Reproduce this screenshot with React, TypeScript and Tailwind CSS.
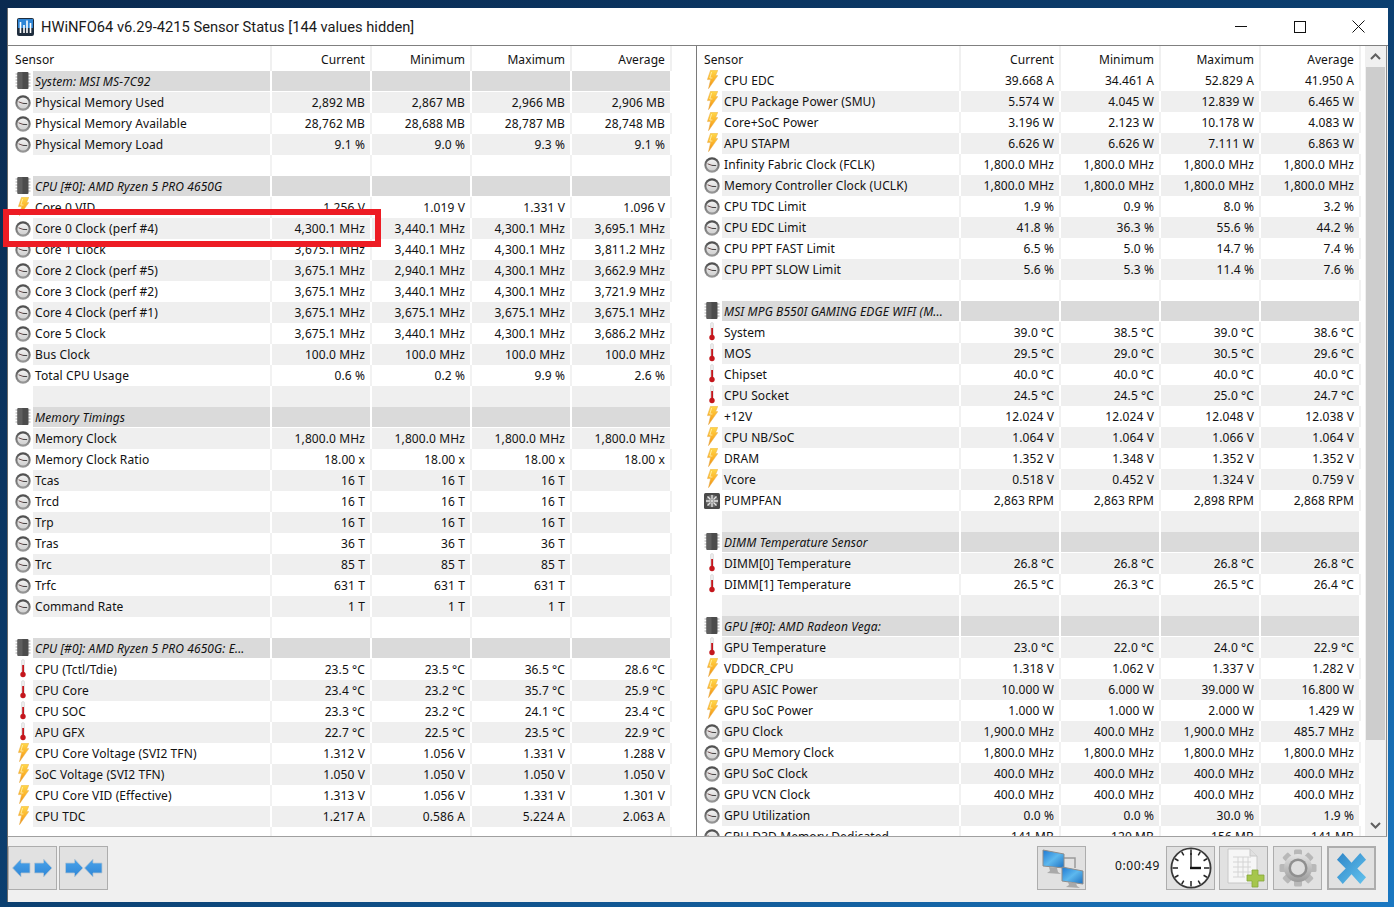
import React from "react";

type Kind = "clock" | "bolt" | "temp" | "fan" | "chip" | "none";
type Row = { k: Kind; n?: string; v?: string[]; g?: boolean };

const r = (k: Kind, n: string, ...v: string[]): Row => ({ k, n, v });
const g = (n: string): Row => ({ k: "chip", n, g: true });
const blank: Row = { k: "none" };

const left: Row[] = [
  g("System: MSI MS-7C92"),
  r("clock", "Physical Memory Used", "2,892 MB", "2,867 MB", "2,966 MB", "2,906 MB"),
  r("clock", "Physical Memory Available", "28,762 MB", "28,688 MB", "28,787 MB", "28,748 MB"),
  r("clock", "Physical Memory Load", "9.1 %", "9.0 %", "9.3 %", "9.1 %"),
  blank,
  g("CPU [#0]: AMD Ryzen 5 PRO 4650G"),
  r("bolt", "Core 0 VID", "1.256 V", "1.019 V", "1.331 V", "1.096 V"),
  r("clock", "Core 0 Clock (perf #4)", "4,300.1 MHz", "3,440.1 MHz", "4,300.1 MHz", "3,695.1 MHz"),
  r("clock", "Core 1 Clock", "3,675.1 MHz", "3,440.1 MHz", "4,300.1 MHz", "3,811.2 MHz"),
  r("clock", "Core 2 Clock (perf #5)", "3,675.1 MHz", "2,940.1 MHz", "4,300.1 MHz", "3,662.9 MHz"),
  r("clock", "Core 3 Clock (perf #2)", "3,675.1 MHz", "3,440.1 MHz", "4,300.1 MHz", "3,721.9 MHz"),
  r("clock", "Core 4 Clock (perf #1)", "3,675.1 MHz", "3,675.1 MHz", "3,675.1 MHz", "3,675.1 MHz"),
  r("clock", "Core 5 Clock", "3,675.1 MHz", "3,440.1 MHz", "4,300.1 MHz", "3,686.2 MHz"),
  r("clock", "Bus Clock", "100.0 MHz", "100.0 MHz", "100.0 MHz", "100.0 MHz"),
  r("clock", "Total CPU Usage", "0.6 %", "0.2 %", "9.9 %", "2.6 %"),
  blank,
  g("Memory Timings"),
  r("clock", "Memory Clock", "1,800.0 MHz", "1,800.0 MHz", "1,800.0 MHz", "1,800.0 MHz"),
  r("clock", "Memory Clock Ratio", "18.00 x", "18.00 x", "18.00 x", "18.00 x"),
  r("clock", "Tcas", "16 T", "16 T", "16 T", ""),
  r("clock", "Trcd", "16 T", "16 T", "16 T", ""),
  r("clock", "Trp", "16 T", "16 T", "16 T", ""),
  r("clock", "Tras", "36 T", "36 T", "36 T", ""),
  r("clock", "Trc", "85 T", "85 T", "85 T", ""),
  r("clock", "Trfc", "631 T", "631 T", "631 T", ""),
  r("clock", "Command Rate", "1 T", "1 T", "1 T", ""),
  blank,
  g("CPU [#0]: AMD Ryzen 5 PRO 4650G: E..."),
  r("temp", "CPU (Tctl/Tdie)", "23.5 °C", "23.5 °C", "36.5 °C", "28.6 °C"),
  r("temp", "CPU Core", "23.4 °C", "23.2 °C", "35.7 °C", "25.9 °C"),
  r("temp", "CPU SOC", "23.3 °C", "23.2 °C", "24.1 °C", "23.4 °C"),
  r("temp", "APU GFX", "22.7 °C", "22.5 °C", "23.5 °C", "22.9 °C"),
  r("bolt", "CPU Core Voltage (SVI2 TFN)", "1.312 V", "1.056 V", "1.331 V", "1.288 V"),
  r("bolt", "SoC Voltage (SVI2 TFN)", "1.050 V", "1.050 V", "1.050 V", "1.050 V"),
  r("bolt", "CPU Core VID (Effective)", "1.313 V", "1.056 V", "1.331 V", "1.301 V"),
  r("bolt", "CPU TDC", "1.217 A", "0.586 A", "5.224 A", "2.063 A"),
  blank,
];

const right: Row[] = [
  r("bolt", "CPU EDC", "39.668 A", "34.461 A", "52.829 A", "41.950 A"),
  r("bolt", "CPU Package Power (SMU)", "5.574 W", "4.045 W", "12.839 W", "6.465 W"),
  r("bolt", "Core+SoC Power", "3.196 W", "2.123 W", "10.178 W", "4.083 W"),
  r("bolt", "APU STAPM", "6.626 W", "6.626 W", "7.111 W", "6.863 W"),
  r("clock", "Infinity Fabric Clock (FCLK)", "1,800.0 MHz", "1,800.0 MHz", "1,800.0 MHz", "1,800.0 MHz"),
  r("clock", "Memory Controller Clock (UCLK)", "1,800.0 MHz", "1,800.0 MHz", "1,800.0 MHz", "1,800.0 MHz"),
  r("clock", "CPU TDC Limit", "1.9 %", "0.9 %", "8.0 %", "3.2 %"),
  r("clock", "CPU EDC Limit", "41.8 %", "36.3 %", "55.6 %", "44.2 %"),
  r("clock", "CPU PPT FAST Limit", "6.5 %", "5.0 %", "14.7 %", "7.4 %"),
  r("clock", "CPU PPT SLOW Limit", "5.6 %", "5.3 %", "11.4 %", "7.6 %"),
  blank,
  g("MSI MPG B550I GAMING EDGE WIFI (M..."),
  r("temp", "System", "39.0 °C", "38.5 °C", "39.0 °C", "38.6 °C"),
  r("temp", "MOS", "29.5 °C", "29.0 °C", "30.5 °C", "29.6 °C"),
  r("temp", "Chipset", "40.0 °C", "40.0 °C", "40.0 °C", "40.0 °C"),
  r("temp", "CPU Socket", "24.5 °C", "24.5 °C", "25.0 °C", "24.7 °C"),
  r("bolt", "+12V", "12.024 V", "12.024 V", "12.048 V", "12.038 V"),
  r("bolt", "CPU NB/SoC", "1.064 V", "1.064 V", "1.066 V", "1.064 V"),
  r("bolt", "DRAM", "1.352 V", "1.348 V", "1.352 V", "1.352 V"),
  r("bolt", "Vcore", "0.518 V", "0.452 V", "1.324 V", "0.759 V"),
  r("fan", "PUMPFAN", "2,863 RPM", "2,863 RPM", "2,898 RPM", "2,868 RPM"),
  blank,
  g("DIMM Temperature Sensor"),
  r("temp", "DIMM[0] Temperature", "26.8 °C", "26.8 °C", "26.8 °C", "26.8 °C"),
  r("temp", "DIMM[1] Temperature", "26.5 °C", "26.3 °C", "26.5 °C", "26.4 °C"),
  blank,
  g("GPU [#0]: AMD Radeon Vega:"),
  r("temp", "GPU Temperature", "23.0 °C", "22.0 °C", "24.0 °C", "22.9 °C"),
  r("bolt", "VDDCR_CPU", "1.318 V", "1.062 V", "1.337 V", "1.282 V"),
  r("bolt", "GPU ASIC Power", "10.000 W", "6.000 W", "39.000 W", "16.800 W"),
  r("bolt", "GPU SoC Power", "1.000 W", "1.000 W", "2.000 W", "1.429 W"),
  r("clock", "GPU Clock", "1,900.0 MHz", "400.0 MHz", "1,900.0 MHz", "485.7 MHz"),
  r("clock", "GPU Memory Clock", "1,800.0 MHz", "1,800.0 MHz", "1,800.0 MHz", "1,800.0 MHz"),
  r("clock", "GPU SoC Clock", "400.0 MHz", "400.0 MHz", "400.0 MHz", "400.0 MHz"),
  r("clock", "GPU VCN Clock", "400.0 MHz", "400.0 MHz", "400.0 MHz", "400.0 MHz"),
  r("clock", "GPU Utilization", "0.0 %", "0.0 %", "30.0 %", "1.9 %"),
  r("clock", "GPU D3D Memory Dedicated", "141 MB", "120 MB", "156 MB", "141 MB"),
];

function Defs() {
  return (
    <svg width="0" height="0" className="absolute">
      <defs>
        <linearGradient id="boltG" x1="0" y1="0" x2="0" y2="1">
          <stop offset="0" stopColor="#ffd84a" />
          <stop offset="0.55" stopColor="#fbb026" />
          <stop offset="1" stopColor="#e8891a" />
        </linearGradient>
        <linearGradient id="clockG" x1="0" y1="0" x2="0" y2="1">
          <stop offset="0" stopColor="#4a4a4a" />
          <stop offset="1" stopColor="#9c9c9c" />
        </linearGradient>
        <linearGradient id="faceG" x1="0" y1="0" x2="0" y2="1">
          <stop offset="0" stopColor="#f2f2f2" />
          <stop offset="1" stopColor="#d0d0d0" />
        </linearGradient>
        <linearGradient id="blueG" x1="0" y1="0" x2="0" y2="1">
          <stop offset="0" stopColor="#4aa3ea" />
          <stop offset="1" stopColor="#2f86d6" />
        </linearGradient>
        <linearGradient id="xG" x1="0" y1="0" x2="1" y2="1">
          <stop offset="0" stopColor="#2f86c8" />
          <stop offset="1" stopColor="#63c3ee" />
        </linearGradient>
        <linearGradient id="gearG" x1="0" y1="0" x2="0" y2="1">
          <stop offset="0" stopColor="#e4e4e4" />
          <stop offset="1" stopColor="#9a9a9a" />
        </linearGradient>
        <linearGradient id="screenG" x1="0" y1="0" x2="1" y2="1">
          <stop offset="0" stopColor="#1e78d2" />
          <stop offset="0.5" stopColor="#5db8ee" />
          <stop offset="1" stopColor="#1d6fc0" />
        </linearGradient>
      </defs>
    </svg>
  );
}

function ClockIcon() {
  return (
    <svg width="16" height="16" viewBox="0 0 16 16">
      <circle cx="8" cy="8" r="7.7" fill="url(#clockG)" />
      <circle cx="8" cy="8" r="5.6" fill="url(#faceG)" />
      <path d="M8 8.4 L3.6 6.8" stroke="#6b4a4a" strokeWidth="1" />
      <path d="M8 8.4 L12.2 8.6" stroke="#444" strokeWidth="1" />
    </svg>
  );
}
function BoltIcon() {
  return (
    <svg width="11" height="19" viewBox="0 0 11 19" className="self-start">
      <path d="M3.5 0.3 L10.8 0.3 L8.6 5.6 L10.8 5.6 L1.5 18.7 L3.6 9.6 L0.4 9.6 Z" fill="url(#boltG)" stroke="#e9b04f" strokeWidth="0.5" />
      <path d="M4.6 2 L2.8 8 L5.4 8" stroke="#fff3b5" strokeWidth="0.8" fill="none" />
    </svg>
  );
}
function TempIcon() {
  return (
    <svg width="8" height="19" viewBox="0 0 8 19" className="self-start">
      <rect x="2.5" y="0.5" width="3" height="14" rx="1.5" fill="#ececec" stroke="#d0d0d0" strokeWidth="0.5" />
      <rect x="3.2" y="6" width="1.8" height="9" fill="#c4161c" />
      <circle cx="4" cy="15.5" r="2.7" fill="#c4161c" />
    </svg>
  );
}
function FanIcon() {
  return (
    <svg width="16" height="16" viewBox="0 0 16 16">
      <rect width="16" height="16" rx="1.5" fill="#4a4a4a" />
      <circle cx="8" cy="8" r="6.2" fill="#6f6f6f" />
      <path d="M8 6 L8 2 M10 8 L14 8 M8 10 L8 14 M6 8 L2 8 M9.5 6.5 L12.5 3.5 M9.5 9.5 L12.5 12.5 M6.5 9.5 L3.5 12.5 M6.5 6.5 L3.5 3.5" stroke="#e6e6e6" strokeWidth="1.3" />
      <circle cx="8" cy="8" r="1.7" fill="#d0d0d0" />
    </svg>
  );
}
function ChipIcon() {
  return (
    <svg width="16" height="17" viewBox="0 0 16 17" className="self-start mt-[1px]">
      <path d="M0.5 2H15.5M0.5 5H15.5M0.5 8H15.5M0.5 11H15.5M0.5 14H15.5" stroke="#a8a8a8" strokeWidth="1" />
      <rect x="2.5" y="0" width="11" height="17" rx="1" fill="#4c4c4c" />
      <rect x="2.5" y="0" width="5" height="17" rx="1" fill="#5f5f5f" />
    </svg>
  );
}
function Icon({ k }: { k: Kind }) {
  if (k === "clock") return <ClockIcon />;
  if (k === "bolt") return <BoltIcon />;
  if (k === "temp") return <TempIcon />;
  if (k === "fan") return <FanIcon />;
  if (k === "chip") return <ChipIcon />;
  return null;
}

function ValueCell({ text, shade }: { text: string; shade: string }) {
  return (
    <div className={`w-[100px] shrink-0 pr-[5px] text-right leading-[21px] border-r-2 ${shade}`}>{text}</div>
  );
}

function SensorRow({ row, index }: { row: Row; index: number }) {
  const odd = index % 2 === 1;
  const bg = row.g ? "bg-[#dadada] border-b border-white" : odd ? "bg-[#efefef]" : "bg-white";
  const shade = row.g || odd ? "border-r-white" : "border-r-[#f2f2f2]";
  const values = row.v ?? ["", "", "", ""];
  return (
    <div className="flex h-[21px] shrink-0 items-stretch">
      <div className="w-[25px] shrink-0 pl-[7px] pr-[2px] flex items-center justify-center">
        <Icon k={row.k} />
      </div>
      <div className={`flex ${bg}`}>
        <div className={`w-[239px] shrink-0 pl-[2px] leading-[21px] whitespace-nowrap overflow-hidden border-r-2 ${shade} ${row.g ? "italic" : ""}`}>
          {row.n}
        </div>
        {values.map((t, i) => (
          <ValueCell key={i} text={t} shade={shade} />
        ))}
      </div>
    </div>
  );
}

function Header({ className }: { className: string }) {
  return (
    <div className={`flex shrink-0 items-stretch text-[#111] ${className}`}>
      <div className="w-[264px] shrink-0 pl-[7px] leading-[27px] border-r-2 border-[#f0f0f0]">Sensor</div>
      {["Current", "Minimum", "Maximum", "Average"].map((t) => (
        <div key={t} className="w-[100px] shrink-0 pr-[5px] text-right leading-[27px] border-r-2 border-[#f0f0f0]">
          {t}
        </div>
      ))}
    </div>
  );
}

function Pane({ rows, className, headerClass }: { rows: Row[]; className: string; headerClass: string }) {
  return (
    <div className={`flex flex-col overflow-hidden ${className}`}>
      <Header className={headerClass} />
      {rows.map((row, i) => (
        <SensorRow key={i} row={row} index={i} />
      ))}
    </div>
  );
}

function Btn({ children, className = "" }: { children: React.ReactNode; className?: string }) {
  return (
    <div className={`w-[49px] h-[44px] shrink-0 flex items-center justify-center bg-[#e1e1e1] border border-[#adadad] ${className}`}>
      {children}
    </div>
  );
}

const leftArrow = "M0.5 10 L9 1 L9 5 L18 5 L18 15 L9 15 L9 19 Z";
const rightArrow = "M18 10 L9.5 1 L9.5 5 L0.5 5 L0.5 15 L9.5 15 L9.5 19 Z";

function ArrowsOut() {
  return (
    <svg width="41" height="20" viewBox="0 0 41 20">
      <path d={leftArrow} fill="url(#blueG)" stroke="#b9c6d2" strokeWidth="0.8" />
      <path d={rightArrow} transform="translate(22 0)" fill="url(#blueG)" stroke="#b9c6d2" strokeWidth="0.8" />
    </svg>
  );
}
function ArrowsIn() {
  return (
    <svg width="38" height="20" viewBox="0 0 38 20">
      <path d={rightArrow} fill="url(#blueG)" stroke="#b9c6d2" strokeWidth="0.8" />
      <path d={leftArrow} transform="translate(19 0)" fill="url(#blueG)" stroke="#b9c6d2" strokeWidth="0.8" />
    </svg>
  );
}
function Network() {
  return (
    <svg width="44" height="40" viewBox="0 0 44 40">
      <path d="M24 10 H35 V20" stroke="#9a9a9a" strokeWidth="1.5" fill="none" />
      <path d="M3 2 L24 6 L24 20 L3 18 Z" fill="url(#screenG)" stroke="#8d8d8d" />
      <path d="M9 19 L17 20 L18 24 L21 26 L7 25 L10 23 Z" fill="#a9a9a9" />
      <path d="M22 19 L43 23 L43 36 L22 33 Z" fill="url(#screenG)" stroke="#8d8d8d" />
      <path d="M28 34 L36 35 L37 38 L40 40 L26 39 L29 37 Z" fill="#a9a9a9" />
    </svg>
  );
}
function BigClock() {
  const ticks = Array.from({ length: 12 }, (_, i) => i * 30);
  return (
    <svg width="42" height="42" viewBox="0 0 42 42">
      <circle cx="21" cy="21" r="19.6" fill="#fff" stroke="#3a3a3a" strokeWidth="1.8" />
      {ticks.map((a) => (
        <line key={a} x1="21" y1="2.5" x2="21" y2={a % 90 === 0 ? 8 : 6.5} stroke="#222" strokeWidth="1.5" transform={`rotate(${a} 21 21)`} />
      ))}
      <path d="M21 21 L21 6" stroke="#222" strokeWidth="1.4" />
      <path d="M20 21 L31 21" stroke="#111" strokeWidth="2.4" />
    </svg>
  );
}
function Doc() {
  return (
    <svg width="42" height="40" viewBox="0 0 42 40">
      <path d="M5 1 H27 L34 8 V35 H5 Z" fill="#f6f6f6" stroke="#c8c8c8" />
      <path d="M27 1 V8 H34" fill="#e0e0e0" stroke="#c8c8c8" />
      <path d="M10 9 H28 M10 14 H28 M10 19 H28 M10 24 H28 M10 29 H22 M15 9 V29 M20 9 V29 M25 9 V29" stroke="#d4d4d4" />
      <path d="M29 22 H35 V27 H41 V33 H35 V39 H29 V33 H24 V27 H29 Z" fill="#a6c64c" stroke="#86a63a" strokeWidth="0.8" />
    </svg>
  );
}
function Gear() {
  const teeth = Array.from({ length: 8 }, (_, i) => i * 45);
  return (
    <svg width="38" height="38" viewBox="0 0 38 38">
      {teeth.map((a) => (
        <rect key={a} x="15" y="0.5" width="8" height="9" rx="1.5" fill="#b8b8b8" transform={`rotate(${a} 19 19)`} />
      ))}
      <circle cx="19" cy="19" r="14" fill="url(#gearG)" />
      <circle cx="19" cy="19" r="9.5" fill="#8f8f8f" />
      <circle cx="19" cy="19" r="7" fill="#dedede" />
    </svg>
  );
}
function BlueX() {
  return (
    <svg width="31" height="33" viewBox="0 0 32 34">
      <path d="M7 1 L16 11 L25 1 L31 8 L22 17 L31 26 L25 33 L16 23 L7 33 L1 26 L10 17 L1 8 Z" fill="url(#xG)" />
    </svg>
  );
}

export default function App() {
  return (
    <div className="relative w-[1394px] h-[907px] overflow-hidden bg-gradient-to-br from-[#0a2a50] via-[#0b3f70] to-[#1a78c2] pt-[8px] pl-[7px] pr-[6px] pb-[5px] text-[12px] tracking-[0.1px] text-[#111] font-['Noto_Sans',sans-serif]">
      <Defs />
      <div className="relative flex flex-col h-full bg-[#f0f0f0] border-l border-[#6a6a6a]">
        <div className="h-[38px] shrink-0 bg-white flex items-center pl-[9px] border-b border-[#808080]">
          <svg width="17" height="18" viewBox="0 0 17 18" className="shrink-0">
            <rect width="17" height="18" rx="2" fill="#1f2d3d" />
            <rect x="1" y="1" width="15" height="9" fill="#2f86d6" />
            <path d="M3.5 4 V15 M7 7 V15 M10 2.5 V15 M13.5 5 V15" stroke="#fff" strokeWidth="1.6" />
          </svg>
          <span className="ml-[7px] pt-[1px] text-[14.7px] tracking-normal text-[#1a1a1a] font-['Roboto',sans-serif]">HWiNFO64 v6.29-4215 Sensor Status [144 values hidden]</span>
          <div className="ml-auto flex items-center h-full">
            <div className="w-[59px] flex justify-center"><div className="w-[12px] h-px bg-[#111]" /></div>
            <div className="w-[59px] flex justify-center"><div className="w-[12px] h-[12px] border border-[#111]" /></div>
            <div className="w-[59px] flex justify-center">
              <svg width="13" height="13" viewBox="0 0 13 13"><path d="M0.5 0.5 L12.5 12.5 M12.5 0.5 L0.5 12.5" stroke="#111" strokeWidth="1" /></svg>
            </div>
          </div>
        </div>
        <div className="flex h-[791px] shrink-0 mr-[1px] bg-white border-b border-[#a0a0a0] border-r border-r-[#8a8a8a]">
          <Pane rows={left} className="w-[688px] shrink-0" headerClass="h-[25px]" />
          <div className="w-[1px] shrink-0 bg-[#7a7a7a]" />
          <Pane rows={right} className="flex-1 min-w-0" headerClass="h-[24px]" />
          <div className="w-[21px] shrink-0 bg-[#f0f0f0] flex flex-col">
            <div className="h-[21px] w-full flex items-center justify-center">
              <svg width="11" height="7" viewBox="0 0 11 7"><path d="M1 6 L5.5 1.5 L10 6" stroke="#606060" strokeWidth="2" fill="none" /></svg>
            </div>
            <div className="ml-[1px] w-[19px] h-[673px] bg-[#cdcdcd]" />
            <div className="mt-auto h-[21px] w-full flex items-center justify-center">
              <svg width="11" height="7" viewBox="0 0 11 7"><path d="M1 1 L5.5 5.5 L10 1" stroke="#606060" strokeWidth="2" fill="none" /></svg>
            </div>
          </div>
        </div>
        <div className="flex-1 flex items-start pt-[9px] pr-[12px]">
          <Btn><ArrowsOut /></Btn>
          <Btn className="ml-[2px]"><ArrowsIn /></Btn>
          <div className="ml-auto flex items-start">
            <Btn><Network /></Btn>
            <div className="w-[80px] h-[40px] pr-[6px] flex items-center justify-end text-[12px] tracking-[0.6px]">0:00:49</div>
            <Btn><BigClock /></Btn>
            <Btn className="ml-[4px]"><Doc /></Btn>
            <Btn className="ml-[5px]"><Gear /></Btn>
            <Btn className="ml-[5px] border-2 border-[#0078d7]"><BlueX /></Btn>
          </div>
        </div>
        <div className="absolute left-[-5px] top-[201px] w-[378px] h-[38px] border-[6px] border-[#ed1c24]" />
      </div>
    </div>
  );
}
